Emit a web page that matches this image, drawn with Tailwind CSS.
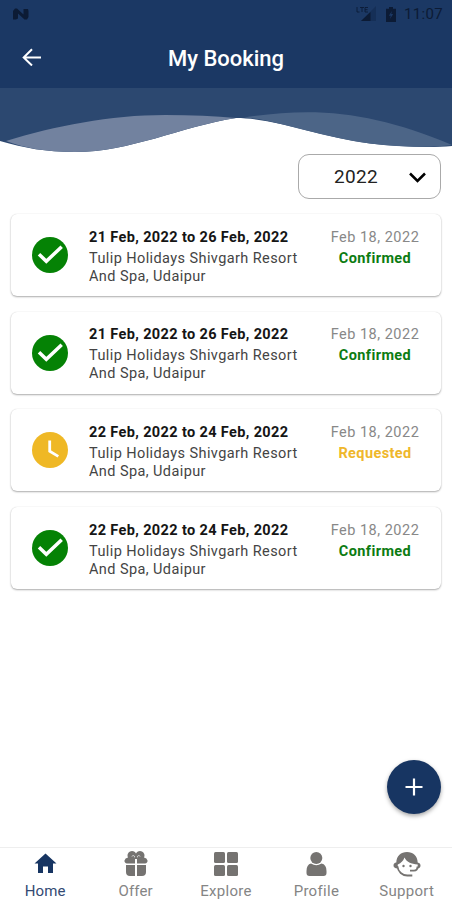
<!DOCTYPE html>
<html lang="en">
<head>
<meta charset="utf-8">
<title>My Booking</title>
<script src="https://cdn.jsdelivr.net/npm/@tailwindcss/browser@4"></script>
</head>
<body class="bg-white font-['Roboto',sans-serif]">
<svg class="hidden">
  <symbol id="check" viewBox="0 0 36 36"><circle cx="18" cy="18" r="18" fill="#058205"/><path d="M7 17.200 14.300 24.300 29.700 9.700" fill="none" stroke="#fff" stroke-width="3.500"/></symbol>
  <symbol id="clock" viewBox="0 0 36 36"><circle cx="18" cy="18" r="18" fill="#efb825"/><path d="M17.700 8.500v10.700l8.600 5.200" fill="none" stroke="#fff" stroke-width="2.800"/></symbol>
</svg>
<div class="relative flex h-[900px] w-[452px] flex-col overflow-hidden bg-white">
  <header class="flex h-[88px] shrink-0 flex-col bg-[#1b3864]">
    <div class="flex h-7 items-center pl-[13px] pr-[8px] text-[#0c1b35]">
      <svg class="h-3 w-4" viewBox="0 0 16 12"><path d="M0 11.500V3l2-2.500h2l6.500 6V1H15l.5 2v6L14 11.500h-2.500L5 5.500v5l-2 1z" fill="#0c1b35"/></svg>
      <div class="ml-auto flex items-center">
        <svg class="h-4 w-5" viewBox="0 0 20 16"><path d="M1 1v5h2.500M4 1.500h4M6 1.500V6M12 1.500H9V6h3M9 3.700h2.500" fill="none" stroke="#0c1b35" stroke-width=".9"/><path d="M20 0v15H5z" fill="#10264a" opacity=".5"/><path d="M14.500 6v9H5z" fill="#0c1b35"/></svg>
        <svg class="ml-[10px] h-[15px] w-[10px]" viewBox="0 0 10 15"><path d="M3 0h4v1.700h3V15H0V1.700h3z" fill="#0c1b35"/><path d="M6 4 2.800 8.700h2L4 12l3.200-5h-2z" fill="#1b3864"/></svg>
        <span class="ml-[8px] w-[40px] whitespace-nowrap text-[15px] tracking-[.35px]">11:07</span>
      </div>
    </div>
    <div class="relative flex h-[60px] items-center justify-center">
      <svg class="absolute left-[22px] top-[20px] h-[18px] w-[19px]" viewBox="0 0 19 18"><path d="M19 9.500H2M10 1.200 1.700 9.500l8.300 8" fill="none" stroke="#fff" stroke-width="2"/></svg>
      <h1 class="whitespace-nowrap text-[22px] font-medium text-white">My Booking</h1>
    </div>
  </header>
  <svg class="h-[66px] w-[452px] shrink-0" viewBox="0 0 452 66">
    <path d="M0 0H452V58C430 60 400 59 370 55.500C320 49 275 30 236 30C180 39 130 64 75 64C45 64 25 60 0 53Z" fill="#2c4870"/>
    <path d="M6 53C55 38 110 27 165 27Q205 27 236 30C180 39 130 64 75 64C45 64 25 60 6 53Z" fill="#72829f"/>
    <path d="M244 29.500C320 18 375 25 452 57C430 60 400 59 370 55.500C315 48 275 31 244 29.500Z" fill="#4c6587"/>
  </svg>
  <main class="flex flex-col pl-[11px] pr-[11px]">
    <div class="flex h-[45px] w-[143px] items-center self-end rounded-[11px] border border-[#aaa] pl-[35px] pr-[14px] pt-px text-[#222]">
      <span class="whitespace-nowrap text-[19px] tracking-[.35px]">2022</span>
      <svg class="ml-auto h-[11px] w-[17px]" viewBox="0 0 17 11"><path d="m1 1.500 7.500 7.500L16 1.500" fill="none" stroke="#000" stroke-width="2.500"/></svg>
    </div>
    <div id="bookings" class="mt-[15px] flex flex-col gap-[15.700px]"></div>
  </main>
  <template id="booking">
    <article class="flex h-[82px] shrink-0 rounded-[6px] bg-white pl-[21px] shadow-[0_1px_2px_rgba(0,0,0,.32),0_0_1px_rgba(0,0,0,.14)]">
      <svg class="mt-[23px] size-9 shrink-0"><use/></svg>
      <div class="ml-[21px] w-[220px] shrink-0 whitespace-nowrap pt-[14.500px] text-[14.500px] leading-[18px] tracking-[.41px] text-[#444]">
        <p class="dates mb-[3px] font-bold tracking-[.37px] text-[#151515]"></p>
        <p>Tulip Holidays Shivgarh Resort</p>
        <p>And Spa, Udaipur</p>
      </div>
      <div class="ml-[12px] w-[108px] whitespace-nowrap pt-[14.500px] text-center text-[14.500px] leading-[18px]">
        <p class="mb-[3px] tracking-[.5px] text-[#888]">Feb 18, 2022</p>
        <p class="status font-bold tracking-[.4px]"></p>
      </div>
    </article>
  </template>
  <button class="absolute left-[387px] top-[760px] flex size-[54px] items-center justify-center rounded-full bg-[#173562] shadow-[0_2px_4px_rgba(0,0,0,.35)]">
    <svg class="size-[18px]" viewBox="0 0 18 18"><path d="M9 .5v17M.5 9h17" stroke="#fff" stroke-width="2.200"/></svg>
  </button>
  <nav class="mt-auto grid h-[53px] shrink-0 grid-cols-5 border-t border-[#eee] text-center text-[15px] leading-[18px] tracking-[.1px] text-[#858585]">
    <a class="flex flex-col items-center pt-[3px] text-[#334a73]">
      <svg class="size-[26px]" viewBox="0 0 26 26"><path d="M13.500 2.500 2.500 12.500H6v9.500h5V15.500h5V22h5v-9.500h3.500z" fill="#173562"/></svg><span class="mt-[5px]">Home</span></a>
    <a class="flex flex-col items-center pt-[3px]">
      <svg class="size-[26px]" viewBox="0 0 26 26"><path d="M12 14v11H7a4 4 0 0 1-4-4V14zM14 14h9v7a4 4 0 0 1-4 4h-5zM12 12.500H4a2.500 2.500 0 0 1-2.500-3Q2 7 5 6.500A4 4 0 0 1 13 2.500a4 4 0 0 1 8 4Q24 7 24.500 9.500a2.500 2.500 0 0 1-2.500 3h-8V8h-2z" fill="#757371"/><path d="M9 5.500a1.300 1.300 0 0 1 2.500.8M14.500 6.300a1.300 1.300 0 0 1 2.500-.8" fill="none" stroke="#ddd" stroke-width="1"/></svg><span class="mt-[5px]">Offer</span></a>
    <a class="flex flex-col items-center pt-[3px]">
      <svg class="size-[26px]" viewBox="0 0 26 26" fill="#757371"><rect x="1" y="1" width="11" height="11" rx="1.500"/><rect x="14" y="1" width="11" height="11" rx="1.500"/><rect x="1" y="14" width="11" height="11" rx="1.500"/><rect x="14" y="14" width="11" height="11" rx="1.500"/></svg><span class="mt-[5px] tracking-[.3px]">Explore</span></a>
    <a class="flex flex-col items-center pt-[3px]">
      <svg class="size-[26px]" viewBox="0 0 26 26" fill="#757371"><circle cx="13.300" cy="7" r="6"/><path d="M8 12.500q5.300 3.500 10.500 0 5 1 5 7.500v2q0 3-3 3H6.500q-3 0-3-3v-2Q3.500 13.500 8 12.500z"/></svg><span class="mt-[5px] tracking-[.3px]">Profile</span></a>
    <a class="flex flex-col items-center pt-[3px]">
      <svg class="h-[26px] w-[28px]" viewBox="0 0 28 26"><path d="M3.300 11.500C3.500 5 8 1 14 1s10.500 4 10.700 10.500q2.800.5 2.800 3t-2.800 3V13.500C18 13 13.500 11 11.500 6.500Q10 11 4.800 13.500l-.3 4q-4-.4-4-3t2.800-3z" fill="#757371"/><path d="M4.300 15c.8 6 5 9.500 10 9.500h5M24.500 15.500c0 3.500-1.500 4.200-3.500 4.200h-4" fill="none" stroke="#757371" stroke-width="1.800"/><circle cx="10.500" cy="15" r="1.200" fill="#757371"/><circle cx="17.500" cy="15" r="1.200" fill="#757371"/></svg><span class="mt-[5px] tracking-[.3px]">Support</span></a>
  </nav>
</div>
<script>
const bookings = [
  ["21 Feb, 2022 to 26 Feb, 2022", "Confirmed"],
  ["21 Feb, 2022 to 26 Feb, 2022", "Confirmed"],
  ["22 Feb, 2022 to 24 Feb, 2022", "Requested"],
  ["22 Feb, 2022 to 24 Feb, 2022", "Confirmed"]
];
for (const [dates, status] of bookings) {
  const card = document.getElementById("booking").content.cloneNode(true);
  const ok = status === "Confirmed";
  card.querySelector("use").setAttribute("href", ok ? "#check" : "#clock");
  card.querySelector(".dates").textContent = dates;
  const s = card.querySelector(".status");
  s.textContent = status;
  s.classList.add(ok ? "text-[#0c7c12]" : "text-[#efb72b]");
  document.getElementById("bookings").append(card);
}
</script>
</body>
</html>
